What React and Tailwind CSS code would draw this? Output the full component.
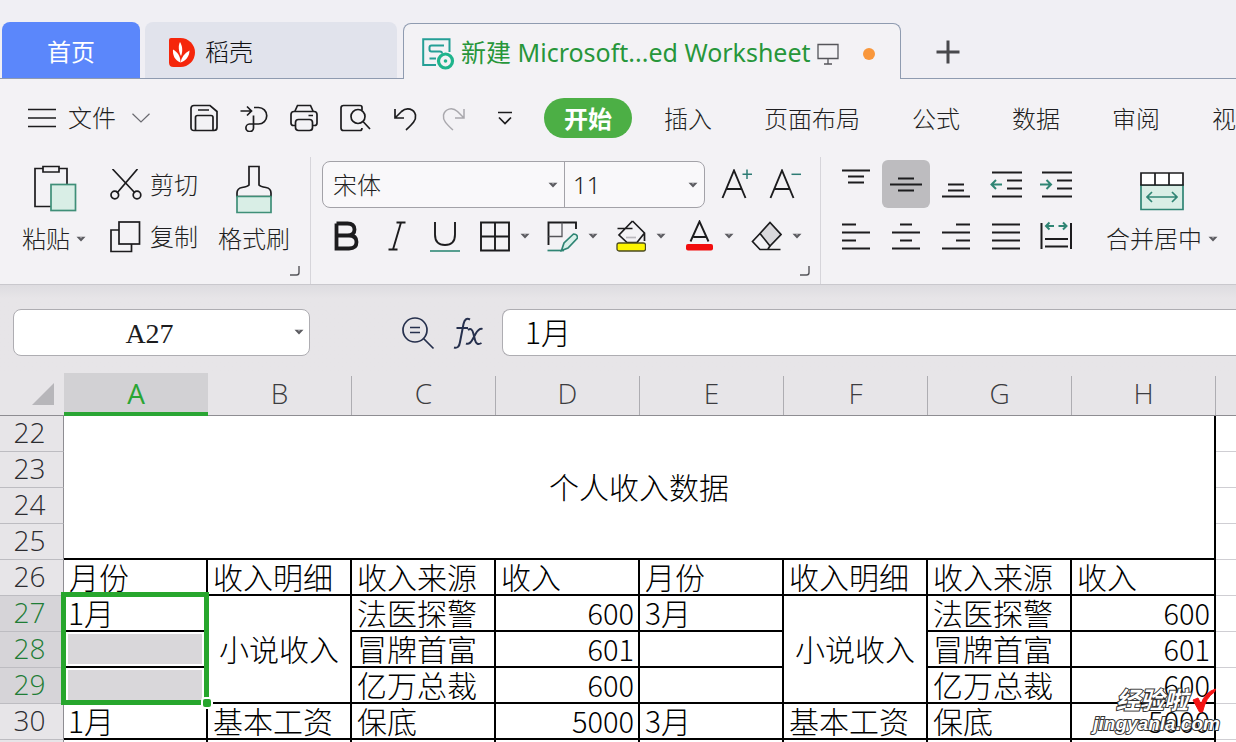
import { useState } from "react";

const menus = ["开始", "插入", "页面布局", "公式", "数据", "审阅", "视图"];
const columns = ["A", "B", "C", "D", "E", "F", "G", "H"];

const UI_FONT = "font-['Noto_Sans','Noto_Sans_CJK_SC',sans-serif]";

const Icon = ({ w = 32, h = 32, className = "", children }) => (
  <svg
    width={w}
    height={h}
    viewBox={`0 0 ${w} ${h}`}
    fill="none"
    stroke="#1c1c1e"
    strokeWidth="1.7"
    className={`shrink-0 ${className}`}
    aria-hidden="true"
  >
    {children}
  </svg>
);

const Caret = ({ className = "" }) => (
  <svg width="10" height="6" viewBox="0 0 10 6" className={`shrink-0 ${className}`} aria-hidden="true">
    <path d="M0.5 0.8h9L5 5.4z" fill="#5b5b60" />
    <path d="M3.6 1.2h2.8L5 2.6z" fill="#b9b8bd" />
  </svg>
);

const Corner = () => (
  <svg width="10" height="10" viewBox="0 0 10 10" className="absolute right-[10px] bottom-2" aria-hidden="true">
    <path d="M9 0v6.5Q9 9 6.500 9H0" fill="none" stroke="#55555a" strokeWidth="1.4" />
  </svg>
);

/* Tabs */
function TabBar() {
  return (
    <nav className="flex h-[79px] items-end bg-[#f0eff4] whitespace-nowrap" aria-label="标签">
      <div className="flex h-full items-end gap-[5px] border-b border-[#8f9bb0] pl-0.5 pr-[6px]">
        <button className="h-14 w-[138px] rounded-t-lg bg-[#5b87fb] pt-1 text-2xl text-white">首页</button>
        <button className="flex h-14 w-[252px] items-center gap-2.5 rounded-t-lg bg-[#e1e3ec] pl-[23px] pt-1 text-2xl font-light text-[#0f0f12]">
          <svg width="27" height="31" viewBox="0 0 27 31" aria-hidden="true">
            <path d="M3 1h9.500a14.500 14.500 0 0 1 0 29H5.500Q1 30 1 25.500V3Q1 1 3 1z" fill="#f5260b" />
            <path d="M12 5C14.500 9 15 14 13 19C10.500 14 10 9 12 5z" fill="#fff" />
            <path d="M5 12.500C9.500 15 12.500 19 12.500 25.500C6.500 23 4.500 18 5 12.500z" fill="#fff" />
            <path d="M21.500 13.500C21.500 19 18 24 12.500 25.500C13.500 20 16.500 16 21.500 13.500z" fill="#fff" />
          </svg>
          稻壳
        </button>
      </div>
      <div className="flex h-14 w-[498px] items-center rounded-t-lg border border-b-0 border-[#8f9bb0] bg-[#f3f2f5] pl-[18px] pt-1">
        <svg width="33" height="32" viewBox="0 0 33 32" fill="none" stroke="#1fb48c" aria-hidden="true">
          <path d="M14 27H1.200V1.200H27.500V14" strokeWidth="2" stroke="#259f96" />
          <path d="M22 7.500H9.500Q7.500 7.500 7.500 9.500V11.500Q7.500 13.500 9.500 13.500H18Q20 13.500 20 15.500M7.500 20.500H14" strokeWidth="2" stroke="#259f96" />
          <circle cx="23.500" cy="23" r="7" strokeWidth="3.200" fill="#f3f2f5" />
          <circle cx="23.500" cy="23" r="1.800" fill="#1fb48c" stroke="none" />
        </svg>
        <a href="#sheet" className="ml-1.5 pb-1 text-[25px] leading-8 text-[#27963a]">新建 Microsoft...ed Worksheet</a>
        <svg width="22" height="22" viewBox="0 0 22 22" fill="none" stroke="#55555a" strokeWidth="1.300" className="ml-1.5 shrink-0" aria-hidden="true">
          <path d="M1 1.500h20v14H1zM11 15.500v5.500M7 21h8" />
        </svg>
        <span className="ml-6 size-3 shrink-0 rounded-full bg-[#f9973b]" />
      </div>
      <div className="flex h-full flex-1 items-end border-b border-[#8f9bb0]">
        <button className="ml-[34px] flex h-14 items-center pt-1" aria-label="新建标签">
          <Icon w={26} h={26}>
            <path d="M13 1.500v23M1.500 13h23" stroke="#48484c" strokeWidth="3" />
          </Icon>
        </button>
      </div>
    </nav>
  );
}

/* Quick access bar and ribbon menu */
function MenuBar({ active, onSelect }) {
  return (
    <div className="flex h-[78px] items-center whitespace-nowrap text-2xl font-light text-[#1f1f22]">
      <button className="ml-7 flex items-center gap-3">
        <Icon w={28} h={20}>
          <path d="M0 1.500h28M0 10h28M0 18.500h28" />
        </Icon>
        文件
        <Icon w={18} h={10} className="ml-1">
          <path d="M0.500 0.800L9 9L17.500 0.800" stroke="#6a6a70" strokeWidth="1.200" />
        </Icon>
      </button>
      <span className="ml-5 h-11 w-px bg-[#cfced3]" />
      <div className="ml-5 flex items-center gap-[22px]">
        <button aria-label="保存">
          <Icon w={28} h={28}>
            <path d="M4 1.500H20L27 7.500V23.500Q27 26.500 24 26.500H4Q1 26.500 1 23.500V4.500Q1 1.500 4 1.500z" />
            <path d="M5.500 26V13.500Q5.500 11.500 7.500 11.500H21Q23 11.500 23 13.500V26M8 6H19" />
          </Icon>
        </button>
        <button aria-label="输出为PDF">
          <Icon w={28} h={28}>
            <path d="M0.500 7H11M7 2.500L11.500 7L7 11.500" />
            <path d="M14 3.500H18.500A8 8 0 0 1 18.500 20H9.500A3.800 3.800 0 1 0 13.500 24V11.500" />
          </Icon>
        </button>
        <button aria-label="打印">
          <Icon w={28} h={28}>
            <path d="M5 7L7.500 1.500H20.500L23 7M6 21.500H3.500Q1 21.500 1 19V10.500Q1 7.500 4 7.500H24Q27 7.500 27 10.500V19Q27 21.500 24.500 21.500H22" />
            <path d="M8.500 15.500H19.500Q22.500 15.500 22.500 18.500V23.500Q22.500 26.500 19.500 26.500H8.500Q5.500 26.500 5.500 23.500V18.500Q5.500 15.500 8.500 15.500zM18.500 11.500H23" />
          </Icon>
        </button>
        <button aria-label="打印预览">
          <Icon w={31} h={28}>
            <path d="M22 6.500V3.500Q22 1.500 20 1.500H3.500Q1 1.500 1 4V24Q1 26.500 3.500 26.500H20Q22 26.500 22 24" />
            <circle cx="18" cy="12.500" r="7" fill="#f3f2f5" />
            <path d="M23 17.500L30 25" />
          </Icon>
        </button>
        <button aria-label="撤销">
          <Icon w={26} h={26}>
            <path d="M2 4V13H11M2 13L8.500 6.500C14 1.500 21 4 22.500 10C23.500 15.500 19 19.500 13 25" />
          </Icon>
        </button>
        <button aria-label="恢复">
          <Icon w={26} h={26}>
            <path d="M23 4V13H14M23 13L16.500 6.500C11 1.500 4 4 2.500 10C1.500 15.500 6 19.500 12 25" stroke="#a9a8ad" strokeWidth="1.500" />
          </Icon>
        </button>
        <button className="ml-2" aria-label="自定义快速访问工具栏">
          <Icon w={16} h={14}>
            <path d="M1 1.500h14M2 6.500L8 12.500L14 6.500" />
          </Icon>
        </button>
      </div>
      <span className="ml-[17px] h-11 w-px bg-[#cfced3]" />
      <div className="ml-[14px] flex gap-3">
        {menus.map((name) => (
          <button
            key={name}
            onClick={() => onSelect(name)}
            className={`h-10 rounded-full px-5 pt-0.5 ${active === name ? "bg-[#4caf45] font-bold text-white" : ""}`}
          >
            {name}
          </button>
        ))}
      </div>
    </div>
  );
}

function ClipboardGroup() {
  return (
    <section className="relative flex w-[311px] shrink-0 border-r border-[#d6d5da] pl-[22px]">
      <button className="flex h-24 flex-col items-start justify-between">
        <Icon w={44} h={48} className="ml-3 mt-2">
          <path d="M9 3.500H1V41.500H17M25 3.500H33V19" />
          <path d="M9 1.500H25V7H9z" />
          <rect x="17" y="19.500" width="24.500" height="26" fill="#d9eee6" stroke="#3f8f78" />
        </Icon>
        <span className="flex items-center gap-1.5">
          粘贴
          <Caret />
        </span>
      </button>
      <div className="ml-6 flex flex-col pt-0.5">
        <button className="flex h-[52px] items-center gap-2">
          <Icon>
            <path d="M2.500 0L25 24M27.500 0L7 24" />
            <circle cx="4.800" cy="26" r="3.800" />
            <circle cx="27" cy="26" r="3.800" />
          </Icon>
          剪切
        </button>
        <button className="flex h-[52px] items-center gap-2">
          <Icon>
            <path d="M9 9H1V30.500H21.500V23" />
            <rect x="9" y="1" width="20.500" height="22" />
          </Icon>
          复制
        </button>
      </div>
      <button className="ml-5 flex h-24 flex-col items-center justify-between">
        <Icon w={38} h={50} className="mt-2">
          <path d="M14 1.500H24V20Q25 21.500 31 22.500Q36 23.500 36 28V31.500H2V28Q2 23.500 7 22.500Q13 21.500 14 20z" />
          <path d="M2 31.500V47.500H36V31.500z" fill="#d9eee6" stroke="#3f8f78" />
        </Icon>
        <span>格式刷</span>
      </button>
      <Corner />
    </section>
  );
}

function FontGroup() {
  return (
    <section className="relative w-[510px] shrink-0 border-r border-[#d6d5da] pl-[11px] pt-1">
      <div className="flex items-center">
        <div className="flex h-[47px] w-[383px] rounded-lg border border-[#a3a2a8] bg-[#f9f8fa]">
          <div className="relative w-[242px] border-r border-[#a3a2a8]">
            <select aria-label="字体" className="h-full w-full appearance-none bg-transparent pl-2.5 outline-none">
              <option>宋体</option>
              <option>黑体</option>
            </select>
            <Caret className="pointer-events-none absolute right-1.5 top-5" />
          </div>
          <div className="relative flex-1">
            <select aria-label="字号" className="h-full w-full appearance-none bg-transparent pl-2 outline-none">
              <option>11</option>
              <option>12</option>
            </select>
            <Caret className="pointer-events-none absolute right-1.5 top-5" />
          </div>
        </div>
        <button className="ml-4" aria-label="增大字号">
          <Icon>
            <path d="M1.500 29L13 1.500L24.500 29M5.500 20H20.500" strokeWidth="1.900" />
            <path d="M26 0.500V10M21.500 5.300H31" stroke="#2d7b74" strokeWidth="1.500" />
          </Icon>
        </button>
        <button className="ml-4" aria-label="减小字号">
          <Icon>
            <path d="M1.500 29L13 1.500L24.500 29M5.500 20H20.500" strokeWidth="1.900" />
            <path d="M22.500 5.300H32" stroke="#2d7b74" strokeWidth="1.500" />
          </Icon>
        </button>
      </div>
      <div className="mt-3 flex items-center pl-3">
        <button aria-label="加粗">
          <Icon w={26} h={32}>
            <path d="M2.500 3.500H13.500Q20.500 3.500 20.500 9.500Q20.500 15.500 13.500 15.500H2.500M13.500 15.500H15Q22.500 15.500 22.500 22Q22.500 28.500 15 28.500H2.500V3.500" strokeWidth="3.800" />
          </Icon>
        </button>
        <button className="ml-7" aria-label="倾斜">
          <Icon w={18} h={32}>
            <path d="M8.500 2.500H17.500M0.500 29.500H9.500M13 2.500L5 29.500" strokeWidth="1.900" />
          </Icon>
        </button>
        <button className="ml-6" aria-label="下划线">
          <Icon w={30} h={32}>
            <path d="M5 2V14.500Q5 25 15 25Q25 25 25 14.500V2" strokeWidth="1.900" />
            <path d="M0 31H30" stroke="#3c917e" />
          </Icon>
        </button>
        <button className="ml-5 flex items-center gap-2.5" aria-label="边框">
          <Icon w={30}>
            <path d="M1 2.500H29V30.500H1zM15 2.500V30.500M1 16.500H29" strokeWidth="1.900" />
          </Icon>
          <Caret />
        </button>
        <button className="ml-[17px] flex items-center gap-2.5" aria-label="绘图边框">
          <Icon w={31}>
            <path d="M1.500 25V2.500H29V9" strokeWidth="1.900" />
            <path d="M15 2.500V16.500H1.500" stroke="#55555a" strokeWidth="1.300" />
            <path d="M14.500 30.500L17 23L26.500 14Q30.500 14 30.500 18L21 28z" fill="#d9f0ea" stroke="#2f8574" />
            <path d="M0.500 30.500H17" stroke="#2f8574" />
          </Icon>
          <Caret />
        </button>
        <button className="ml-[17px] flex items-center gap-2.5" aria-label="填充颜色">
          <Icon w={31}>
            <path d="M17.500 1L29.500 13V21M17.500 1L4 15L12 22.500H22L29.500 13M2.500 8.500H17.500" />
            <path d="M11 17.500H21" stroke="#b9b8bd" />
            <rect x="2" y="23" width="28.500" height="8" rx="2" fill="#fdf500" stroke="#4a4a20" strokeWidth="1.300" />
          </Icon>
          <Caret />
        </button>
        <button className="ml-[17px] flex items-center gap-2.5" aria-label="字体颜色">
          <Icon w={31}>
            <path d="M7.500 21.500L16.500 1.500L25.500 21.500M10.500 17H23" strokeWidth="1.900" />
            <rect x="3" y="24" width="27" height="6.500" rx="2" fill="#f20d0d" stroke="none" />
          </Icon>
          <Caret />
        </button>
        <button className="ml-[17px] flex items-center gap-2.5" aria-label="清除格式">
          <Icon w={31}>
            <path d="M9 13.500L19 2.500L30 14.500L19 26z" fill="#d9d8dc" />
            <path d="M9 13.500L1.500 21.500L9 29.500H29.500M19 26L17 29" />
          </Icon>
          <Caret />
        </button>
      </div>
      <Corner />
    </section>
  );
}

const alignIcons = [
  ["顶端对齐", <path d="M2 2.500h28M8 8.500h16M8 14.500h16" />],
  ["垂直居中", <path d="M8 10.500h16M0 16.500h32M8 22.500h16" />],
  ["底端对齐", <path d="M8 16.500h16M8 22.500h16M2 28.500h28" />],
  [
    "减少缩进量",
    <>
      <path d="M2 4.500h30M17 12.500h15M17 20.500h15M2 28.500h30" />
      <path d="M12 16.500H1.500M6 12L1.500 16.500L6 21" stroke="#2f8574" />
    </>,
  ],
  [
    "增加缩进量",
    <>
      <path d="M2 4.500h30M17 12.500h15M17 20.500h15M2 28.500h30" />
      <path d="M0 16.500H11M6.500 12L11 16.500L6.500 21" stroke="#2f8574" />
    </>,
  ],
  ["左对齐", <path d="M2 4.500h14M2 12.500h28M2 20.500h14M2 28.500h28" />],
  ["水平居中", <path d="M10 4.500h12M2 12.500h28M10 20.500h12M2 28.500h28" />],
  ["右对齐", <path d="M16 4.500h14M2 12.500h28M16 20.500h14M2 28.500h28" />],
  ["两端对齐", <path d="M2 4.500h28M2 12.500h28M2 20.500h28M2 28.500h28" />],
  [
    "分散对齐",
    <>
      <path d="M1.500 3v26M31 3v26M5 19h23M5 26.500h23" />
      <path d="M14 6H6M9.500 2.500L6 6L9.500 9.500M18.500 6h8M23 2.500L26.500 6L23 9.500" stroke="#2f8574" />
    </>,
  ],
];

function AlignGroup() {
  return (
    <section className="flex shrink-0 pl-[10px]">
      <div className="grid grid-cols-5 grid-rows-[52px_52px] content-start pt-px">
        {alignIcons.map(([label, drawing]) => (
          <div key={label} className="flex w-[50px] items-center justify-center">
            <button
              aria-label={label}
              className={`flex size-12 items-center justify-center rounded-md ${label === "垂直居中" ? "bg-[#bdbcbf]" : ""}`}
            >
              <Icon>
                <g strokeWidth="2">{drawing}</g>
              </Icon>
            </button>
          </div>
        ))}
      </div>
      <button className="ml-[25px] flex h-24 flex-col items-center justify-between">
        <Icon w={44} h={40} className="mt-3.5">
          <path d="M1 14V38.500H43V14z" fill="#d9eee6" stroke="#2f8574" />
          <path d="M1 2H43V14H1zM15 2V14M29 2V14" fill="#fff" />
          <path d="M7 26H37M12 21L7 26L12 31M32 21L37 26L32 31" stroke="#2f8574" />
        </Icon>
        <span className="flex items-center gap-1.5">
          合并居中
          <Caret />
        </span>
      </button>
    </section>
  );
}

function FormulaBar() {
  return (
    <div className="flex items-center bg-linear-to-b from-[#dddce0] to-[#e7e5e8] to-15% pb-[17px] pt-6">
      <div className="relative ml-[13px] w-[297px] shrink-0">
        <input
          aria-label="名称框"
          defaultValue="A27"
          className="h-[47px] w-full rounded-lg border border-[#aeadb2] bg-white pr-6 pt-0.5 text-center font-['Liberation_Serif',serif] text-[28px] text-[#1c1c1e] outline-none"
        />
        <Caret className="absolute right-1.5 top-5" />
      </div>
      <button className="ml-[91px]" aria-label="浏览公式结果">
        <Icon w={34} h={34}>
          <circle cx="14" cy="14" r="12" stroke="#26304d" />
          <path d="M22.500 22.500L32.500 32.500M9 11.500h10M9 16.500h10" stroke="#26304d" />
        </Icon>
      </button>
      <button className="ml-[17px]" aria-label="插入函数">
        <Icon w={34} h={34}>
          <path d="M18 3.500Q13 1 11.500 8L8 26Q7 33 2 31.500M4.500 12H16" stroke="#26304d" strokeWidth="2" />
          <path d="M16 14Q20 11 21.500 18L23 24Q24.500 30 29.500 27M30.500 13Q27 12 23.500 18L20.500 23.500Q17.500 29 14 27.500" stroke="#26304d" strokeWidth="2" />
        </Icon>
      </button>
      <input
        aria-label="编辑栏"
        defaultValue="1月"
        className="ml-4 h-[47px] min-w-0 flex-1 rounded-l-lg border border-r-0 border-[#aeadb2] bg-white pb-1 pl-[22px] font-['Noto_Sans_CJK_SC',sans-serif] text-[30px] font-light text-black outline-none"
      />
    </div>
  );
}

const cell = "border-b-2 border-r-2 border-black bg-white pb-0.5 leading-8";

const Cell = ({ children, className = "pl-[5px]", ...rest }) => (
  <td className={`${cell} ${className}`} {...rest}>
    {children}
  </td>
);

const Num = ({ children }) => <td className={`${cell} pr-1 text-right text-[29px]`}>{children}</td>;

const RowHead = ({ n }) => (
  <th
    scope="row"
    className={`border-b border-r border-b-[#bdbcc1] border-r-[#8e8d92] pb-0.5 pr-1 font-['Open_Sans',sans-serif] text-[28px] font-light leading-[33px] ${
      n >= 27 && n <= 29 ? "bg-[#d6d4d8] text-[#1f7d36]" : "bg-[#e7e5e8] text-[#2c2c30]"
    }`}
  >
    {n}
  </th>
);

const Blank = () => <td className="border-b border-[#cfced3] bg-white" />;

function Sheet() {
  return (
    <table id="sheet" className="w-full min-w-[1236px] table-fixed border-separate border-spacing-0 whitespace-nowrap font-['Noto_Sans_CJK_SC',sans-serif] text-[30px] font-light text-black">
      <colgroup>
        <col className="w-16" />
        {columns.map((c) => (
          <col key={c} className="w-36" />
        ))}
        <col />
      </colgroup>
      <thead>
        <tr className="h-[43px] font-['Open_Sans',sans-serif] text-[28px] leading-[34px]">
          <th className="border-b border-[#8e8d92] bg-[#e7e5e8]" aria-label="全选">
            <svg width="22" height="22" viewBox="0 0 22 22" className="ml-8" aria-hidden="true">
              <path d="M22 0V22H0z" fill="#b7b6ba" />
            </svg>
          </th>
          {columns.map((c) => (
            <th
              key={c}
              scope="col"
              className={`p-0 align-bottom ${
                c === "A"
                  ? "border-b-4 border-[#2aa534] bg-[#d2d1d4] font-normal text-[#2aa534]"
                  : "border-b border-[#8e8d92] bg-[#e7e5e8] font-light text-[#3c3c40]"
              }`}
            >
              <div className={c === "A" ? "pb-0.5" : "border-r border-[#aeadb2] pb-[5px]"}>{c}</div>
            </th>
          ))}
          <th className="border-b border-[#8e8d92] bg-[#e7e5e8]" />
        </tr>
      </thead>
      <tbody>
        <tr>
          <RowHead n={22} />
          <Cell colSpan={8} rowSpan={4} className="text-center">个人收入数据</Cell>
          <Blank />
        </tr>
        {[23, 24, 25].map((n) => (
          <tr key={n}>
            <RowHead n={n} />
            <Blank />
          </tr>
        ))}
        <tr>
          <RowHead n={26} />
          {["月份", "收入明细", "收入来源", "收入", "月份", "收入明细", "收入来源", "收入"].map((t, i) => (
            <Cell key={i}>{t}</Cell>
          ))}
          <Blank />
        </tr>
        <tr>
          <RowHead n={27} />
          <td className={`${cell} relative pl-1`}>
            1月
            {/* selection frame over A27:A29 */}
            <span className="pointer-events-none absolute -inset-x-[3px] -top-1 z-10 h-[113px] border-[5px] border-[#27a62d]" />
            <span className="absolute -right-[7px] top-[101px] z-10 size-3 rounded-sm border-2 border-white bg-[#27a62d]" />
          </td>
          <Cell rowSpan={3} className="text-center">小说收入</Cell>
          <Cell>法医探警</Cell>
          <Num>600</Num>
          <Cell>3月</Cell>
          <Cell rowSpan={3} className="text-center">小说收入</Cell>
          <Cell>法医探警</Cell>
          <Num>600</Num>
          <Blank />
        </tr>
        {[
          [28, "冒牌首富", 601],
          [29, "亿万总裁", 600],
        ].map(([n, source, amount]) => (
          <tr key={n}>
            <RowHead n={n} />
            <Cell className="px-1 align-top">
              <div className="mt-0.5 h-[30px] bg-[#d9d7da]" />
            </Cell>
            <Cell>{source}</Cell>
            <Num>{amount}</Num>
            <Cell />
            <Cell>{source}</Cell>
            <Num>{amount}</Num>
            <Blank />
          </tr>
        ))}
        <tr>
          <RowHead n={30} />
          <Cell className="pl-1">1月</Cell>
          <Cell>基本工资</Cell>
          <Cell>保底</Cell>
          <Num>5000</Num>
          <Cell>3月</Cell>
          <Cell>基本工资</Cell>
          <Cell>保底</Cell>
          <Num>5000</Num>
          <Blank />
        </tr>
        <tr className="h-9">
          <th className="border-r border-[#8e8d92] bg-[#e7e5e8]" />
          {columns.map((c) => (
            <Cell key={c} />
          ))}
          <Blank />
        </tr>
      </tbody>
    </table>
  );
}

function Watermark() {
  return (
    <div className="pointer-events-none absolute bottom-2 right-4 z-20 flex flex-col items-end font-['Liberation_Sans','Noto_Sans_CJK_SC',sans-serif] font-bold text-white [-webkit-text-stroke:2px_#333] [paint-order:stroke_fill]">
      <div className="flex items-center gap-1 pr-1 text-2xl leading-6">
        <em>经验啦</em>
        <svg width="24" height="26" viewBox="0 0 24 26" aria-hidden="true">
          <path d="M1 12L6 10L9 16Q13 4 23.500 1L22.500 4Q14 9 10.500 24H7.500z" fill="#f51414" stroke="#f51414" strokeWidth="1" />
        </svg>
      </div>
      <em className="text-[19px] leading-5">jingyanla.com</em>
    </div>
  );
}

export default function App() {
  const [active, setActive] = useState("开始");

  return (
    <div className={`relative h-screen overflow-hidden bg-[#e7e5e8] ${UI_FONT}`}>
      <TabBar />
      <div className="border-b border-[#c9c8cd] bg-[#f3f2f5]">
        <MenuBar active={active} onSelect={setActive} />
        <div className="flex h-[127px] whitespace-nowrap text-2xl font-light leading-7 text-[#1f1f22]">
          <ClipboardGroup />
          <FontGroup />
          <AlignGroup />
        </div>
      </div>
      <FormulaBar />
      <Sheet />
      <Watermark />
    </div>
  );
}
